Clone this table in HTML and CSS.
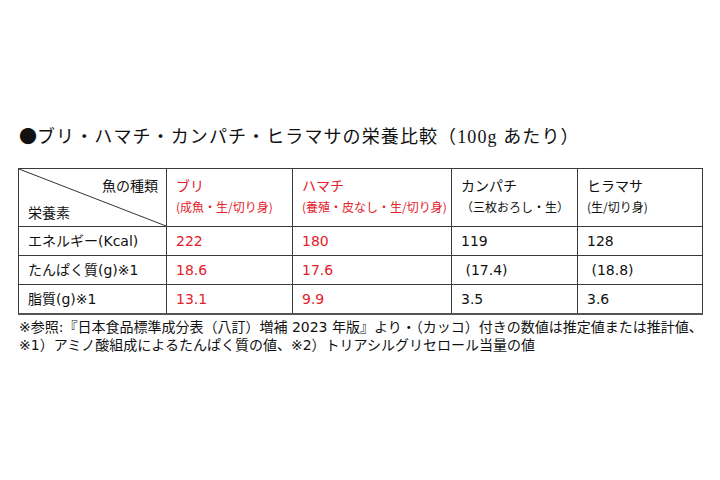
FILE: index.html
```
<!DOCTYPE html>
<html lang="ja">
<head>
<meta charset="utf-8">
<link rel="stylesheet" href="styles.css">
</head>
<body>
<div class="page">
  <h1 class="title"><span class="dot">●</span>ブリ・ハマチ・カンパチ・ヒラマサの栄養比較（100g あたり）</h1>
  <table class="nutri">
    <colgroup>
      <col class="c1"><col class="c2"><col class="c3"><col class="c4"><col class="c5">
    </colgroup>
    <tr class="head">
      <td class="corner">
        <svg class="diag" viewBox="0 0 100 100" preserveAspectRatio="none"><line x1="0" y1="0" x2="100" y2="100" stroke="#333" stroke-width="1" vector-effect="non-scaling-stroke"/></svg>
        <div class="fish">魚の種類</div>
        <div class="nut">栄養素</div>
      </td>
      <td class="red"><div class="name">ブリ</div><div class="sub">(成魚・生/切り身)</div></td>
      <td class="red"><div class="name">ハマチ</div><div class="sub">(養殖・皮なし・生/切り身)</div></td>
      <td><div class="name">カンパチ</div><div class="sub">（三枚おろし・生）</div></td>
      <td><div class="name">ヒラマサ</div><div class="sub">(生/切り身)</div></td>
    </tr>
    <tr>
      <td>エネルギー(Kcal)</td>
      <td class="red">222</td>
      <td class="red">180</td>
      <td>119</td>
      <td>128</td>
    </tr>
    <tr>
      <td>たんぱく質(g)※1</td>
      <td class="red">18.6</td>
      <td class="red">17.6</td>
      <td>&nbsp;(17.4)</td>
      <td>&nbsp;(18.8)</td>
    </tr>
    <tr class="last">
      <td>脂質(g)※1</td>
      <td class="red">13.1</td>
      <td class="red">9.9</td>
      <td>3.5</td>
      <td>3.6</td>
    </tr>
  </table>
  <p class="note">※参照:『日本食品標準成分表（八訂）増補 2023 年版』より・（カッコ）付きの数値は推定値または推計値、<br>※1）アミノ酸組成によるたんぱく質の値、※2）トリアシルグリセロール当量の値</p>
</div>
</body>
</html>
```
FILE: styles.css
```
html, body {
  margin: 0;
  padding: 0;
  background: #ffffff;
}

.page {
  width: 720px;
  height: 480px;
  box-sizing: border-box;
  padding: 123px 18px 0 18px;
  color: #111;
}

.title {
  margin: 0 0 19px 1px;
  font-family: "Liberation Serif", "Noto Sans CJK JP", serif;
  font-weight: 400;
  font-size: 18px;
  line-height: 24px;
  letter-spacing: 1.1px;
  white-space: nowrap;
}

.dot {
  font-family: "Noto Sans CJK JP", sans-serif;
  letter-spacing: 0;
}

.nutri {
  border-collapse: collapse;
  table-layout: fixed;
  width: 684px;
  font-family: "DejaVu Sans", "Noto Sans CJK JP", sans-serif;
  font-size: 14px;
  color: #111;
}

.c1 { width: 148px; }
.c2 { width: 126px; }
.c3 { width: 159px; }
.c4 { width: 126px; }
.c5 { width: 125px; }

.nutri td {
  border: 1px solid #3a3a3a;
  padding: 0 0 0 9px;
  height: 28px;
  vertical-align: middle;
  white-space: nowrap;
  line-height: 18px;
}

.nutri tr.head td {
  height: 58px;
  vertical-align: top;
  padding-top: 6px;
  box-sizing: border-box;
}

.nutri tr.last td {
  border-bottom: 2px solid #555;
}

.name {
  font-family: "Noto Sans CJK JP", sans-serif;
  font-size: 14px;
  line-height: 20px;
}

.sub {
  font-family: "Noto Sans CJK JP", sans-serif;
  font-size: 12px;
  line-height: 16px;
  margin-top: 4px;
}

.red { color: #e3212b; }

.nutri tr.head td.corner {
  position: relative;
  padding: 0;
}

.diag {
  position: absolute;
  left: 0;
  top: 0;
  width: 100%;
  height: 100%;
}

.fish {
  position: absolute;
  right: 8px;
  top: 6px;
  font-family: "Noto Sans CJK JP", sans-serif;
  font-size: 14px;
  line-height: 20px;
}

.nut {
  position: absolute;
  left: 9px;
  bottom: 4px;
  font-family: "Noto Sans CJK JP", sans-serif;
  font-size: 14px;
  line-height: 20px;
}

.note {
  margin: 3px 0 0 1px;
  font-family: "DejaVu Sans", "Noto Sans CJK JP", sans-serif;
  font-size: 14px;
  line-height: 18px;
  color: #111;
  white-space: nowrap;
}
```
